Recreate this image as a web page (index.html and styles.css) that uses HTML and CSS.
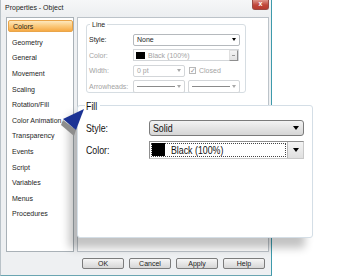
FILE: index.html
```
<!DOCTYPE html>
<html lang="en">
<head>
  <meta charset="UTF-8">
  <title>Properties - Object</title>
  <link rel="stylesheet" href="styles.css">
</head>
<body>
  <div class="window">
    <div class="titlebar">
      <span class="title">Properties - Object</span>
      <span class="close">x</span>
    </div>

    <div class="main">
      <ul class="nav">
        <li class="active">Colors</li>
        <li>Geometry</li>
        <li>General</li>
        <li>Movement</li>
        <li>Scaling</li>
        <li>Rotation/Fill</li>
        <li>Color Animation</li>
        <li>Transparency</li>
        <li>Events</li>
        <li>Script</li>
        <li>Variables</li>
        <li>Menus</li>
        <li>Procedures</li>
      </ul>

      <div class="page">
        <div class="group">
          <span class="legend">Line</span>
          <div class="rows">
            <span class="lbl">Style:</span>
            <div class="combo"><span>None</span><i class="caret"></i></div>

            <span class="lbl off">Color:</span>
            <div class="colorfield">
              <i class="swatch"></i><span>Black (100%)</span><i class="more"></i>
            </div>

            <span class="lbl off">Width:</span>
            <div class="pair">
              <div class="combo off"><span>0 pt</span><i class="caret"></i></div>
              <div class="check"><i class="box">&#10003;</i>Closed</div>
            </div>

            <span class="lbl off">Arrowheads:</span>
            <div class="pair">
              <div class="combo off"><i class="dash"></i><i class="caret"></i></div>
              <div class="combo off"><i class="dash"></i><i class="caret"></i></div>
            </div>
          </div>
        </div>
      </div>
    </div>

    <div class="buttons">
      <button>OK</button>
      <button>Cancel</button>
      <button>Apply</button>
      <button>Help</button>
    </div>
  </div>

  <!-- enlarged view of the fill group -->
  <div class="zoom-panel">
    <span class="legend"><span class="t">Fill</span></span>
    <div class="rows">
      <span class="lbl"><span class="t">Style:</span></span>
      <div class="select"><span class="t">Solid</span><i class="caret"></i></div>
      <span class="lbl"><span class="t">Color:</span></span>
      <div class="colorpick">
        <div class="focus"><i class="swatch"></i><span class="t">Black (100%)</span></div>
        <div class="drop"><i class="caret"></i></div>
      </div>
    </div>
  </div>

  <svg class="pointer" width="30" height="32" viewBox="0 0 30 32">
    <polygon points="4,14 17,24 15,30 2,19" fill="#8d8d8d"/>
    <polygon points="4,13 25,3 17,24" fill="#1b3294"/>
  </svg>
</body>
</html>
```

FILE: styles.css
```
body {
  margin: 0;
  width: 337px;
  height: 279px;
  overflow: hidden;
  position: relative;
  background: #fff;
  font-family: 'Liberation Sans', Arial, sans-serif;
  font-size: 7px;
  color: #1e1e1e;
}
.window {
  width: 270px;
  height: 275px;
  background: #eef0f2;
  border-left: 1px solid #b9c2c8;
  border-right: 1px solid #3e9aab;
  border-bottom: 1px solid #6aa5b1;
  display: flex;
  flex-direction: column;
}
.titlebar {
  height: 17px;
  display: flex;
  justify-content: space-between;
  align-items: flex-start;
  padding-left: 4px;
  background: linear-gradient(#f6f7f8, #eceef0);
}
.title {
  line-height: 16px;
  font-size: 7px;
  color: #222;
}
.close {
  width: 15px;
  height: 9px;
  margin-right: 2px;
  border: 1px solid #9a4a44;
  border-top: none;
  border-radius: 0 0 3px 3px;
  background: linear-gradient(#e0968c, #c0473b 55%, #b93a2e);
  color: #fff;
  font-weight: bold;
  font-size: 7px;
  line-height: 8px;
  text-align: center;
}
.main {
  height: 235px;
  display: flex;
  gap: 3px;
  padding: 0 2px 0 5px;
}
.nav {
  list-style: none;
  margin: 0;
  padding: 1px 0 0;
  width: 66px;
  background: #fff;
  border: 1px solid #a9b1b7;
}
.nav li {
  height: 15.6px;
  line-height: 15.6px;
  padding-left: 5px;
  white-space: nowrap;
}
.nav li.active {
  height: 12px;
  line-height: 12px;
  margin: 1px 0 2.9px 1px;
  padding-left: 4px;
  border: 1px solid #e9a54a;
  border-radius: 2px;
  box-sizing: border-box;
  background: linear-gradient(#fde8bd, #fbc97b 50%, #f6aa45);
}
.page {
  flex: 1;
  background: #fff;
  border: 1px solid #bcc3c9;
}
.group {
  margin: 6px 0 0 8px;
  width: 158px;
  height: 67px;
  border: 1px solid #d6dde2;
  border-radius: 3px;
}
.group .legend {
  display: inline-block;
  margin: -5px 0 0 3px;
  padding: 0 2px;
  line-height: 9px;
  background: #fff;
  vertical-align: top;
}
.group .rows {
  display: grid;
  grid-template-columns: 44px 107px;
  grid-auto-rows: 12px;
  row-gap: 3.6px;
  align-items: center;
  margin-top: 1.5px;
  padding-left: 2px;
}
.lbl { white-space: nowrap; }
.lbl.off { color: #a3a3a3; }
.combo {
  height: 12px;
  box-sizing: border-box;
  border: 1px solid #b5b9bd;
  border-radius: 2px;
  display: flex;
  align-items: center;
  justify-content: space-between;
  padding: 0 3px;
  background: #fff;
}
.combo.off {
  border-color: #d3d6d9;
  color: #a3a3a3;
}
.caret {
  width: 0;
  height: 0;
  border-left: 2.5px solid transparent;
  border-right: 2.5px solid transparent;
  border-top: 3px solid #000;
}
.combo.off .caret { border-top-color: #a8a8a8; }
.colorfield {
  height: 12px;
  width: 106px;
  box-sizing: border-box;
  border: 1px solid #d3d6d9;
  display: flex;
  align-items: center;
  color: #a3a3a3;
  background: #fff;
}
.colorfield .swatch {
  width: 9px;
  height: 7px;
  margin: 0 3px 0 2px;
  background: #000;
}
.colorfield span { flex: 1; }
.colorfield .more {
  width: 9px;
  height: 11px;
  box-sizing: border-box;
  border: 1px solid #8e8e8e;
  border-left-color: #e0e0e0;
  border-top-color: #e0e0e0;
  background: linear-gradient(#f4f4f4, #e2e2e2);
}
.colorfield .more::after {
  content: '';
  display: block;
  margin: 4px auto 0;
  width: 3px;
  height: 1px;
  background: #999;
}
.pair {
  display: grid;
  grid-template-columns: 52px 52px;
  column-gap: 3px;
  height: 12px;
}
.pair:last-child { height: 13px; }
.pair:last-child .combo { height: 13px; }
.dash {
  width: 38px;
  height: 1px;
  background: #8a8a8a;
}
.check {
  display: flex;
  align-items: center;
  gap: 3px;
  color: #a3a3a3;
  padding-left: 1px;
}
.check .box {
  width: 7px;
  height: 7px;
  box-sizing: border-box;
  border: 1px solid #b8b8b8;
  font-style: normal;
  font-size: 7px;
  line-height: 5px;
  text-align: center;
  color: #9a9a9a;
}
.buttons {
  flex: 1;
  display: flex;
  justify-content: flex-end;
  align-items: flex-start;
  gap: 5px;
  padding: 6px 6px 0 0;
}
.buttons button {
  width: 42px;
  height: 11px;
  padding: 0;
  font-family: inherit;
  font-size: 7px;
  line-height: 9px;
  color: #222;
  border: 1px solid #7c7c7c;
  border-radius: 2px;
  background: linear-gradient(#f6f6f6, #e6e6e6 50%, #d6d6d6);
}
.zoom-panel {
  position: absolute;
  left: 77px;
  top: 105px;
  width: 234px;
  height: 131px;
  background: #fff;
  border: 1px solid #d4dee6;
  border-radius: 3px;
  box-shadow: -8px 10px 9px rgba(0, 0, 0, 0.24);
  font-size: 11px;
  color: #111;
}
/* the enlarged text is narrow, like a condensed face */
.zoom-panel .t {
  display: inline-block;
  transform: scaleX(0.8);
  transform-origin: left center;
  white-space: nowrap;
}
.zoom-panel .legend {
  display: inline-block;
  vertical-align: top;
  width: 13px;
  margin: -6.5px 0 0 7px;
  padding: 0 1px;
  line-height: 12px;
  background: #fff;
}
.zoom-panel .rows {
  display: grid;
  grid-template-columns: 63px 155px;
  grid-template-rows: 16px 18px;
  row-gap: 5px;
  align-items: center;
  margin-top: 1.5px;
  padding-left: 8px;
}
.select {
  height: 16px;
  box-sizing: border-box;
  border: 1px solid #7b7b7b;
  border-radius: 3px;
  background: linear-gradient(#f3f3f3, #e4e4e4 50%, #d6d6d6);
  display: flex;
  align-items: center;
  justify-content: space-between;
  padding: 0 4px 0 3px;
}
.select .caret, .drop .caret {
  border-left-width: 3.5px;
  border-right-width: 3.5px;
  border-top-width: 4px;
}
.colorpick {
  height: 18px;
  box-sizing: border-box;
  border: 1px solid #8f8f8f;
  border-right-color: #c9c9c9;
  border-bottom-color: #c9c9c9;
  display: flex;
  background: #fff;
}
.focus {
  flex: 1;
  margin: 1px;
  border: 1px dotted #444;
  display: flex;
  align-items: center;
  gap: 6px;
}
.focus .swatch {
  width: 13px;
  height: 13px;
  background: #000;
}
.drop {
  width: 15px;
  background: linear-gradient(#f4f4f4, #e0e0e0);
  border-left: 1px solid #b8b8b8;
  display: flex;
  align-items: center;
  justify-content: center;
}
.pointer {
  position: absolute;
  left: 59px;
  top: 106px;
}
```
